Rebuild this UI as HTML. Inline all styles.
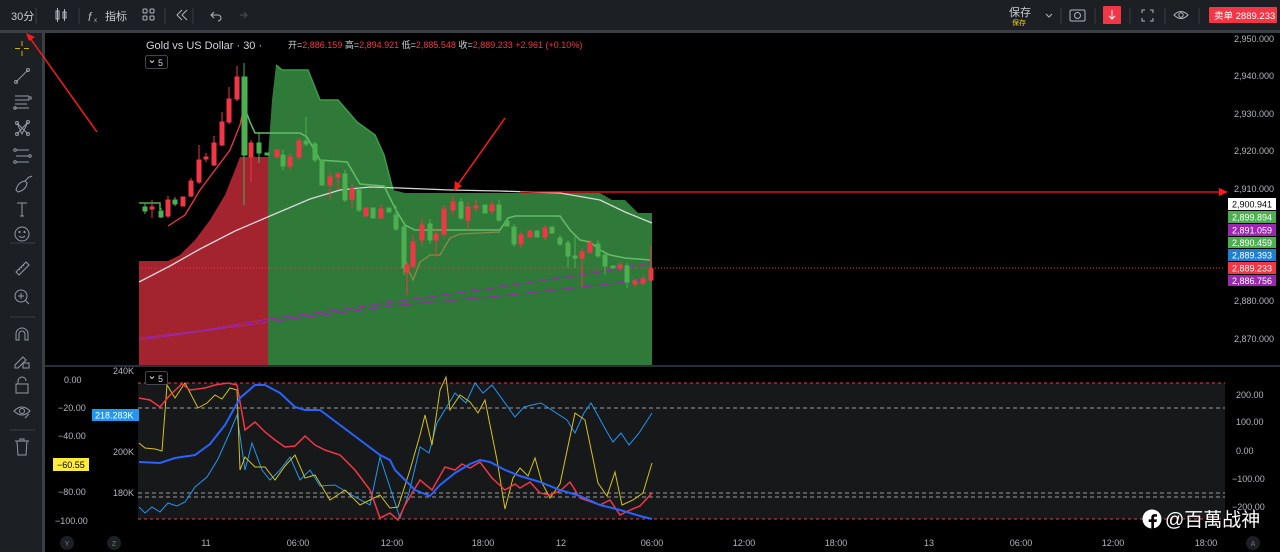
<!DOCTYPE html>
<html><head><meta charset="utf-8"><style>
html,body{margin:0;padding:0;background:#000;width:1280px;height:552px;overflow:hidden}
svg{display:block}
text{font-family:"Liberation Sans","Noto Sans CJK SC",sans-serif}
</style></head><body>
<svg width="1280" height="552" viewBox="0 0 1280 552" xmlns="http://www.w3.org/2000/svg">
<!-- frame -->
<rect x="0" y="0" width="1280" height="552" fill="#000"/>
<rect x="0" y="0" width="1280" height="30" fill="#1c2025"/>
<rect x="0" y="30" width="1280" height="3" fill="#3a3e45"/>
<rect x="0" y="33" width="42" height="519" fill="#1c2025"/>
<rect x="42" y="33" width="3" height="519" fill="#3a3e45"/>
<!-- top bar -->
<text x="11" y="20" font-size="11" fill="#c8cbd0">30分</text>
<line x1="36" y1="8" x2="36" y2="24" stroke="#3a3e45"/>
<g stroke="#b2b5be" fill="none" stroke-width="1">
<rect x="56" y="11" width="3" height="8"/><line x1="57.5" y1="8" x2="57.5" y2="22"/>
<rect x="63" y="12" width="3" height="6"/><line x1="64.5" y1="9" x2="64.5" y2="21"/>
</g>
<line x1="79" y1="8" x2="79" y2="24" stroke="#3a3e45"/>
<text x="88" y="21" font-size="12" fill="#b2b5be" font-style="italic">f</text>
<text x="94" y="22" font-size="6" fill="#b2b5be">x</text>
<text x="105" y="20" font-size="11" fill="#c8cbd0">指标</text>
<g stroke="#b2b5be" fill="none"><rect x="143" y="9" width="4" height="4" rx="1"/><rect x="150" y="9" width="4" height="4" rx="1"/><rect x="143" y="16" width="4" height="4" rx="1"/><rect x="150" y="16" width="4" height="4" rx="1"/></g>
<line x1="165" y1="8" x2="165" y2="24" stroke="#3a3e45"/>
<path d="M182 10 L177 15 L182 20 M187 10 L182 15 L187 20" stroke="#b2b5be" fill="none"/>
<line x1="193" y1="8" x2="193" y2="24" stroke="#3a3e45"/>
<path d="M212 15 h6 a3 3 0 0 1 0 6 M214 12 l-3 3 l3 3" stroke="#b2b5be" fill="none"/>
<path d="M246 15 h-6 M244 12 l3 3 l-3 3" stroke="#4a4e55" fill="none"/>
<text x="1009" y="16" font-size="11" fill="#c8cbd0">保存</text>
<text x="1012" y="25" font-size="7" fill="#f0d000">保存</text>
<path d="M1046 14 l3 3 l3 -3" stroke="#b2b5be" fill="none"/>
<line x1="1061" y1="8" x2="1061" y2="24" stroke="#3a3e45"/>
<g stroke="#b2b5be" fill="none"><rect x="1070" y="10" width="15" height="11" rx="1.5"/><circle cx="1077.5" cy="15.5" r="3"/></g>
<line x1="1095" y1="8" x2="1095" y2="24" stroke="#3a3e45"/>
<rect x="1103" y="6" width="18" height="18" rx="1" fill="#f23645"/>
<path d="M1112 10 v9 M1109 16 l3 3 l3 -3" stroke="#fff" fill="none"/>
<line x1="1130" y1="8" x2="1130" y2="24" stroke="#3a3e45"/>
<path d="M1142 13 v-3 h3 M1150 10 h3 v3 M1153 18 v3 h-3 M1145 21 h-3 v-3" stroke="#b2b5be" fill="none"/>
<line x1="1165" y1="8" x2="1165" y2="24" stroke="#3a3e45"/>
<path d="M1174 15 q7 -7 14 0 q-7 7 -14 0z" stroke="#b2b5be" fill="none"/><circle cx="1181" cy="15" r="2.2" stroke="#b2b5be" fill="none"/>
<line x1="1199" y1="8" x2="1199" y2="24" stroke="#3a3e45"/>
<rect x="1209" y="7" width="68" height="16" rx="1" fill="#f23645"/>
<text x="1214" y="19" font-size="9.5" fill="#fff">卖单 2889.233</text>

<!-- left toolbar icons -->
<g stroke="#9598a1" fill="none" stroke-width="1">
<path d="M22 41 v5 M22 51 v5 M15 48.5 h5 M24 48.5 h5" stroke="#d4b000"/>
<path d="M16 82 L28 70"/><circle cx="16" cy="82" r="1.5"/><circle cx="28" cy="70" r="1.5"/>
<path d="M15 96 h14 M15 100 h14 M15 104 h12 M15 108 h14"/><circle cx="30" cy="98" r="1.3"/><circle cx="15" cy="108" r="1.3"/>
<path d="M17 123 L22 134 L28 122 M17 123 L28 134 M17 134 L28 122"/><circle cx="17" cy="123" r="1.5"/><circle cx="28" cy="122" r="1.5"/><circle cx="17" cy="134" r="1.5"/><circle cx="28" cy="134" r="1.5"/>
<path d="M16 150 h13 M16 156 h13 M16 162 h13"/><circle cx="15" cy="150" r="1.3"/><circle cx="15" cy="162" r="1.3"/><circle cx="30" cy="156" r="1.3"/>
<path d="M16 190 q2 -8 9 -9 l2 2 q-1 7 -9 9 z M25 181 l4 -4 q2 0 3 -1"/>
<path d="M17 203 h10 M22 203 v13 M20 216 h4"/>
<circle cx="22" cy="234" r="7"/><circle cx="19.5" cy="232" r=".6"/><circle cx="24.5" cy="232" r=".6"/><path d="M19 236 q3 3 6 0"/>
<path d="M16 272 L26 262 L29 265 L19 275 Z M19 269 l1 1 M21 267 l1 1 M23 265 l1 1"/>
<circle cx="21" cy="296" r="6"/><path d="M25.5 300.5 L29 304 M21 293 v6 M18 296 h6"/>
<path d="M16 340 v-6 a6 6 0 0 1 12 0 v6 h-3 v-6 a3 3 0 0 0 -6 0 v6 z"/>
<path d="M15 365 l8 -8 l3 3 l-8 8 h-3z"/><rect x="23" y="363" width="6" height="5"/>
<rect x="16" y="384" width="12" height="9"/><path d="M18 384 v-3 a4 4 0 0 1 8 0"/>
<path d="M14 411 q8 -8 16 0 q-8 8 -16 0z"/><circle cx="22" cy="411" r="2.5"/><path d="M25 418 l4 -4"/>
<path d="M15 441 h14 M17 441 l1 14 h8 l1 -14 M20 441 v-2 h4 v2"/>
</g>
<g stroke="#3a3e45"><line x1="10" y1="243" x2="35" y2="243"/><line x1="10" y1="317" x2="35" y2="317"/><line x1="10" y1="430" x2="35" y2="430"/></g>

<!-- main pane -->
<text x="146" y="49" font-size="11" fill="#d1d4dc">Gold vs US Dollar · 30 ·</text>
<text x="288" y="48" font-size="9" fill="#d1d4dc">开=<tspan fill="#f23645">2,886.159</tspan> 高=<tspan fill="#f23645">2,894.921</tspan> 低=<tspan fill="#f23645">2,885.548</tspan> 收=<tspan fill="#f23645">2,889.233</tspan> <tspan fill="#f23645">+2.961 (+0.10%)</tspan></text>
<rect x="145.5" y="55.5" width="22" height="13" rx="2" fill="#000" stroke="#434651"/>
<path d="M150 60.5 l2 2 l2 -2" stroke="#d1d4dc" fill="none"/>
<text x="158" y="66" font-size="9" fill="#d1d4dc">5</text>

<!-- fills -->
<path d="M139 261 L168 261 L180 255 L195 240 L210 220 L225 195 L233 175 L240 157 L268 157 L268 365 L139 365 Z" fill="#a3232f"/>
<path d="M268 157 L272 100 L276 65 L282 70 L308 70 L320 100 L338 100 L357 122 L375 135 L384 155 L393 190 L405 193 L600 193 L612 200 L625 200 L638 213 L652 213 L652 365 L268 365 Z" fill="#2f7a38"/>
<path d="M276 65 L282 70 L308 70 L320 100 L338 100 L357 122 L375 135 L384 155 L393 190" stroke="#3f9a48" fill="none" stroke-width="1.5"/>
<line x1="139" y1="268" x2="1225" y2="268" stroke="#f23645" stroke-dasharray="1 2" stroke-width="1"/>

<!-- lines -->
<polyline points="139,338 200,331 268,319 330,311 400,301 500,287 600,272 652,263" stroke="#9c27b0" fill="none"/>
<polyline points="139,340 268,322 400,305 500,296 600,285 652,279" stroke="#9c27b0" fill="none"/>
<polyline points="139,282 170,266 200,249 235,231 270,216 310,199 340,190 370,187 400,188 450,190 500,191 560,193 600,200 625,212 652,223" stroke="#d8d8d8" fill="none" stroke-width="1.3"/>
<polyline points="244,106 250,122 255,133 300,133 307,137 320,160 347,162 360,184 384,186 396,210 405,225 415,230 500,230 508,218 515,216 560,216 570,230 580,240 590,242 600,250 610,255 625,258 650,260" stroke="#66bb6a" fill="none" stroke-width="1.5"/>
<polyline points="404,260 413,280 420,262 430,255 440,255 450,238 460,234 500,232" stroke="#8a8a4a" fill="none" stroke-width="1.3"/>
<polyline points="139,203 160,203 160,210" stroke="#4caf50" fill="none" stroke-width="1.5"/>
<polyline points="168,226 185,215 200,190 215,170 230,150 240,125 244,106" stroke="#f23645" fill="none" stroke-width="1.3"/>

<!-- candles -->
<g stroke-width="1">
<g fill="#4caf50" stroke="#4caf50">
<line x1="145" y1="203" x2="145" y2="214"/><rect x="143" y="207" width="4" height="4"/>
<line x1="161" y1="208" x2="161" y2="218"/><rect x="159" y="211" width="4" height="6"/>
<line x1="175" y1="197" x2="175" y2="206"/><rect x="173" y="200" width="4" height="4"/>
<line x1="244" y1="63" x2="244" y2="205"/><rect x="242" y="77" width="5" height="78"/>
<line x1="259" y1="132" x2="259" y2="163"/><rect x="257" y="143" width="4" height="10"/>
<rect x="265" y="153" width="4" height="2"/>
<line x1="283" y1="150" x2="283" y2="170"/><rect x="281" y="155" width="4" height="11"/>
<line x1="306" y1="117" x2="306" y2="146"/><rect x="304" y="141" width="4" height="3"/>
<line x1="315" y1="142" x2="315" y2="162"/><rect x="313" y="144" width="4" height="16"/>
<rect x="320" y="160" width="4" height="25"/>
<line x1="345" y1="170" x2="345" y2="202"/><rect x="343" y="174" width="4" height="26"/>
<line x1="359" y1="188" x2="359" y2="212"/><rect x="357" y="190" width="4" height="20"/>
<rect x="371" y="208" width="4" height="10"/>
<rect x="387" y="208" width="4" height="4"/>
<line x1="396" y1="205" x2="396" y2="231"/><rect x="394" y="215" width="4" height="14"/>
<line x1="404" y1="225" x2="404" y2="275"/><rect x="402" y="227" width="4" height="41"/>
<line x1="430" y1="219" x2="430" y2="244"/><rect x="428" y="224" width="4" height="16"/>
<line x1="461" y1="198" x2="461" y2="220"/><rect x="459" y="202" width="4" height="16"/>
<rect x="483" y="205" width="4" height="8"/>
<line x1="499" y1="200" x2="499" y2="222"/><rect x="497" y="205" width="4" height="15"/>
<rect x="505" y="221" width="4" height="5"/>
<line x1="514" y1="224" x2="514" y2="247"/><rect x="512" y="227" width="4" height="17"/>
<rect x="535" y="231" width="4" height="6"/>
<rect x="550" y="227" width="4" height="6"/>
<line x1="560" y1="235" x2="560" y2="246"/><rect x="558" y="238" width="4" height="6"/>
<line x1="568" y1="240" x2="568" y2="268"/><rect x="566" y="243" width="4" height="13"/>
<line x1="575" y1="235" x2="575" y2="268"/><rect x="573" y="256" width="4" height="2"/>
<line x1="598" y1="240" x2="598" y2="258"/><rect x="596" y="244" width="4" height="12"/>
<line x1="605" y1="252" x2="605" y2="275"/><rect x="603" y="255" width="4" height="11"/>
<rect x="611" y="266" width="4" height="2"/>
<line x1="627" y1="263" x2="627" y2="288"/><rect x="625" y="266" width="4" height="16"/>
</g>
<g fill="#f23645" stroke="#f23645">
<line x1="152" y1="200" x2="152" y2="218"/><rect x="150" y="207" width="4" height="2"/>
<line x1="168" y1="196" x2="168" y2="218"/><rect x="166" y="200" width="4" height="16"/>
<rect x="181" y="197" width="4" height="9"/>
<line x1="191" y1="178" x2="191" y2="197"/><rect x="189" y="181" width="4" height="15"/>
<line x1="199" y1="145" x2="199" y2="184"/><rect x="197" y="160" width="4" height="22"/>
<line x1="206" y1="153" x2="206" y2="162"/><rect x="204" y="157" width="4" height="2"/>
<line x1="214" y1="136" x2="214" y2="166"/><rect x="212" y="143" width="4" height="22"/>
<line x1="222" y1="112" x2="222" y2="146"/><rect x="220" y="122" width="4" height="23"/>
<line x1="229" y1="87" x2="229" y2="124"/><rect x="227" y="99" width="4" height="23"/>
<line x1="237" y1="66" x2="237" y2="101"/><rect x="235" y="77" width="4" height="22"/>
<line x1="251" y1="140" x2="251" y2="182"/><rect x="249" y="143" width="4" height="14"/>
<rect x="275" y="150" width="4" height="7"/>
<line x1="290" y1="153" x2="290" y2="170"/><rect x="288" y="157" width="4" height="9"/>
<line x1="299" y1="138" x2="299" y2="160"/><rect x="297" y="141" width="4" height="16"/>
<line x1="330" y1="172" x2="330" y2="200"/><rect x="328" y="177" width="4" height="8"/>
<line x1="338" y1="172" x2="338" y2="190"/><rect x="336" y="174" width="4" height="3"/>
<line x1="352" y1="184" x2="352" y2="208"/><rect x="350" y="189" width="4" height="10"/>
<rect x="364" y="208" width="4" height="8"/>
<line x1="381" y1="205" x2="381" y2="218"/><rect x="379" y="209" width="4" height="9"/>
<line x1="407" y1="262" x2="407" y2="295"/><rect x="405" y="265" width="4" height="7"/>
<line x1="413" y1="235" x2="413" y2="268"/><rect x="411" y="242" width="4" height="24"/>
<line x1="422" y1="218" x2="422" y2="246"/><rect x="420" y="225" width="4" height="15"/>
<line x1="436" y1="228" x2="436" y2="257"/><rect x="434" y="234" width="4" height="6"/>
<line x1="444" y1="205" x2="444" y2="238"/><rect x="442" y="209" width="4" height="25"/>
<line x1="453" y1="196" x2="453" y2="215"/><rect x="451" y="202" width="4" height="8"/>
<line x1="468" y1="202" x2="468" y2="230"/><rect x="466" y="207" width="4" height="13"/>
<line x1="476" y1="200" x2="476" y2="212"/><rect x="474" y="206" width="4" height="2"/>
<line x1="492" y1="201" x2="492" y2="214"/><rect x="490" y="205" width="4" height="6"/>
<line x1="521" y1="232" x2="521" y2="248"/><rect x="519" y="235" width="4" height="9"/>
<rect x="528" y="231" width="4" height="6"/>
<line x1="545" y1="225" x2="545" y2="240"/><rect x="543" y="228" width="4" height="9"/>
<line x1="582" y1="248" x2="582" y2="287"/><rect x="580" y="252" width="4" height="6"/>
<line x1="590" y1="240" x2="590" y2="254"/><rect x="588" y="243" width="4" height="9"/>
<line x1="620" y1="262" x2="620" y2="271"/><rect x="618" y="265" width="4" height="3"/>
<line x1="635" y1="279" x2="635" y2="288"/><rect x="633" y="281" width="4" height="3"/>
<line x1="643" y1="275" x2="643" y2="285"/><rect x="641" y="279" width="4" height="4"/>
<line x1="651" y1="246" x2="651" y2="282"/><rect x="649" y="269" width="4" height="11"/>
</g>
</g>

<!-- annotations -->
<line x1="520" y1="192" x2="1222" y2="192" stroke="#ff1a1a" stroke-width="1.3"/>
<path d="M1228 192 l-9 -4 v8z" fill="#ff1a1a"/>
<line x1="505" y1="118" x2="457" y2="186" stroke="#ff1a1a" stroke-width="1.5"/>
<path d="M454 191 l1 -10 l7 5z" fill="#ff1a1a"/>
<line x1="97" y1="132" x2="30" y2="38" stroke="#ff1a1a" stroke-width="1.5"/>
<path d="M26 33 l9 4 l-6 4z" fill="#ff1a1a"/>

<!-- price axis -->
<g font-size="9" fill="#b2b5be">
<text x="1234" y="42">2,950.000</text>
<text x="1234" y="79">2,940.000</text>
<text x="1234" y="117">2,930.000</text>
<text x="1234" y="154">2,920.000</text>
<text x="1234" y="192">2,910.000</text>
<text x="1234" y="304">2,880.000</text>
<text x="1234" y="342">2,870.000</text>
</g>
<g font-size="9">
<rect x="1228" y="198" width="48" height="12" fill="#fff"/><text x="1232" y="207.5" fill="#000">2,900.941</text>
<rect x="1228" y="211" width="48" height="12" fill="#4caf50"/><text x="1232" y="220.5" fill="#fff">2,899.894</text>
<rect x="1228" y="224" width="48" height="12" fill="#9c27b0"/><text x="1232" y="233.5" fill="#fff">2,891.059</text>
<rect x="1228" y="237" width="48" height="11" fill="#4caf50"/><text x="1232" y="246" fill="#fff">2,890.459</text>
<rect x="1228" y="249" width="48" height="12" fill="#1e7fd0"/><text x="1232" y="258.5" fill="#fff">2,889.393</text>
<rect x="1228" y="262" width="48" height="12" fill="#f23645"/><text x="1232" y="271.5" fill="#fff">2,889.233</text>
<rect x="1228" y="275" width="48" height="11" fill="#9c27b0"/><text x="1232" y="284" fill="#fff">2,886.756</text>
</g>

<!-- divider -->
<rect x="45" y="365" width="1235" height="2" fill="#2a2e39"/>

<!-- lower pane -->
<rect x="138" y="383" width="1087" height="136" fill="#161819"/>
<line x1="138" y1="383" x2="1225" y2="383" stroke="#f23645" stroke-dasharray="3 3"/>
<line x1="138" y1="519" x2="1225" y2="519" stroke="#f23645" stroke-dasharray="3 3"/>
<g stroke="#9a9a9a" stroke-dasharray="4 3"><line x1="138" y1="408" x2="1225" y2="408"/><line x1="138" y1="493" x2="1225" y2="493"/><line x1="138" y1="497" x2="1225" y2="497"/></g>
<rect x="145.5" y="371.5" width="22" height="13" rx="2" fill="#000" stroke="#434651"/>
<path d="M150 376.5 l2 2 l2 -2" stroke="#d1d4dc" fill="none"/>
<text x="158" y="382" font-size="9" fill="#d1d4dc">5</text>

<polyline fill="none" stroke="#2196f3" stroke-width="1" points="139,507 145,513 152,507 160,512 168,503 177,506 185,502 195,487 207,477 218,459 230,432 237,415 245,470 252,443 262,470 270,480 280,470 290,457 300,480 310,470 320,486 335,485 355,497 370,505 380,457 400,518 409,493 420,447 429,453 437,423 455,393 466,403 475,383 483,393 492,385 515,417 524,407 532,405 541,403 567,420 575,433 584,413 591,403 607,432 613,442 621,433 629,445 639,433 652,413"/>
<polyline fill="none" stroke="#d4c21a" stroke-width="1" points="139,443 145,448 155,449 162,451 167,385 175,398 185,383 198,408 207,403 215,395 222,399 230,388 237,390 240,470 245,457 255,467 265,467 275,480 285,466 295,455 305,478 315,475 330,500 345,490 360,505 370,500 380,495 390,508 398,507 410,470 420,435 425,415 432,445 440,390 446,377 450,410 460,395 470,402 478,413 485,400 497,460 505,509 513,478 520,468 528,476 535,458 542,483 550,498 560,484 575,413 585,420 598,483 607,496 615,472 622,505 633,500 643,493 652,463"/>
<polyline fill="none" stroke="#f23645" stroke-width="1.5" points="139,398 150,400 160,407 170,395 182,384 190,390 205,388 215,385 228,383 237,385 245,430 255,422 265,432 275,440 285,447 295,446 305,436 315,445 325,450 340,455 355,470 370,490 380,518 390,513 398,520 405,505 420,480 432,490 445,467 455,470 462,464 470,468 480,462 492,478 505,490 515,484 520,488 530,482 540,493 550,495 560,491 570,482 580,498 600,505 610,500 620,515 630,510 640,506 652,493"/>
<polyline fill="none" stroke="#2962ff" stroke-width="2" points="139,462 160,463 175,458 195,455 210,444 225,425 240,398 255,385 265,385 280,393 295,407 305,410 320,410 340,425 360,440 380,455 390,460 395,470 405,480 415,490 430,496 440,485 455,473 470,464 480,460 490,462 505,470 520,476 540,482 560,490 580,496 600,505 620,510 640,516 652,519"/>

<g font-size="9" fill="#b2b5be">
<text x="64" y="383">0.00</text>
<text x="58" y="411">−20.00</text>
<text x="58" y="439">−40.00</text>
<text x="58" y="495">−80.00</text>
<text x="55" y="524">−100.00</text>
<text x="113" y="374">240K</text>
<text x="113" y="455">200K</text>
<text x="113" y="496">180K</text>
<text x="1236" y="398">200.00</text>
<text x="1236" y="425">100.00</text>
<text x="1236" y="454">0.00</text>
<text x="1232" y="482">−100.00</text>
<text x="1232" y="510">−200.00</text>
</g>
<rect x="53" y="458" width="36" height="13" fill="#ffeb3b"/><text x="57" y="468" font-size="9" fill="#000">−60.55</text>
<rect x="92" y="409" width="47" height="12" fill="#2196f3"/><text x="95" y="418.5" font-size="9" fill="#fff">218.283K</text>

<!-- time axis -->
<g font-size="9" fill="#b2b5be" text-anchor="middle">
<text x="206" y="546">11</text><text x="298" y="546">06:00</text><text x="392" y="546">12:00</text><text x="483" y="546">18:00</text>
<text x="561" y="546">12</text><text x="652" y="546">06:00</text><text x="744" y="546">12:00</text><text x="836" y="546">18:00</text>
<text x="929" y="546">13</text><text x="1021" y="546">06:00</text><text x="1113" y="546">12:00</text><text x="1206" y="546">18:00</text>
</g>
<circle cx="67" cy="543" r="7" fill="#1c1f24"/><text x="67" y="546" font-size="7" fill="#777" text-anchor="middle">Y</text>
<circle cx="114" cy="543" r="7" fill="#1c1f24"/><text x="114" y="546" font-size="7" fill="#777" text-anchor="middle">Z</text>
<circle cx="1253" cy="543" r="7" fill="#1c1f24"/><text x="1253" y="546" font-size="7" fill="#777" text-anchor="middle">A</text>

<!-- watermark -->
<circle cx="1152" cy="519" r="9.5" fill="#fff"/>
<path d="M1154 531 v-9 h2.5 l.4 -2.6 h-2.9 v-1.6 q0 -1.2 1.3 -1.2 h1.7 v-2.3 q-1 -.2 -2.3 -.2 q-3.4 0 -3.4 3.4 v1.9 h-2.6 v2.6 h2.6 v9z" fill="#000"/>
<text x="1165" y="526" font-size="19" fill="#fff">@百萬战神</text>
</svg>
</body></html>
